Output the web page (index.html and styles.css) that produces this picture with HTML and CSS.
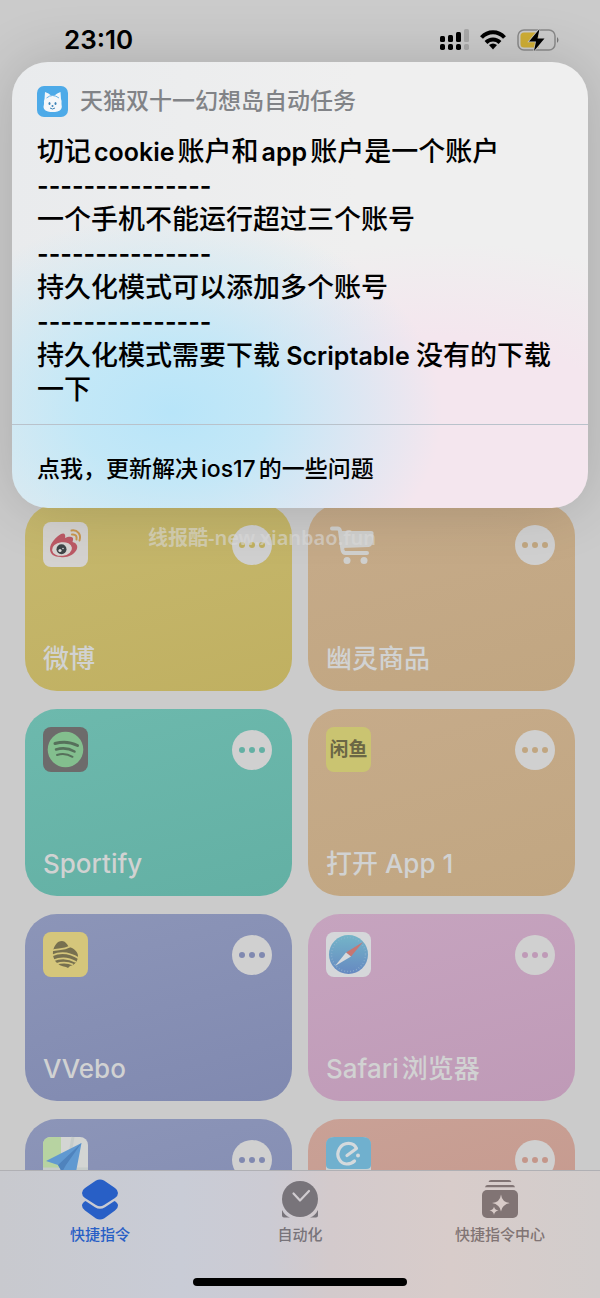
FILE: index.html
```html
<!DOCTYPE html>
<html lang="zh-CN">
<head>
<meta charset="utf-8">
<meta name="viewport" content="width=device-width, initial-scale=1">
<title>快捷指令</title>
<link rel="stylesheet" href="styles.css">
</head>
<body>
<div class="app">
  <header class="status">
    <time class="clock">23:10</time>
    <div class="indicators">
      <svg width="32" height="22" viewBox="0 0 32 22" aria-hidden="true">
        <g fill="#000"><rect x="0" y="7" width="5" height="6" rx="1.5"/><rect x="8" y="6" width="5" height="7" rx="1.5"/><rect x="16" y="3" width="5" height="10" rx="1.5"/><rect x="0" y="15" width="5" height="6" rx="1.8"/><rect x="8" y="15" width="5" height="6" rx="1.8"/><rect x="16" y="15" width="5" height="6" rx="1.8"/></g>
        <g fill="#a9a9a9"><rect x="24" y="0" width="5" height="13" rx="1.5"/><rect x="24" y="15" width="5" height="6" rx="1.8"/></g>
      </svg>
      <svg width="28" height="22" viewBox="0 0 28 22" fill="none" stroke="#000" stroke-width="4" aria-hidden="true">
        <path d="M1.500 8.500C8 1.500 18 1.500 24.500 8.500"/><path d="M6 13.500C10 9.500 16 9.500 20 13.500"/><path d="M13 20.500l-4-4.500q4-3 8 0z" fill="#000" stroke="none"/>
      </svg>
      <svg width="44" height="26" viewBox="0 0 44 26" aria-hidden="true">
        <rect x="2" y="3" width="37" height="20" rx="6" fill="none" stroke="#8a8a8a" stroke-width="1.5"/>
        <path d="M8 5.500h15v15H8q-3.500 0-3.500-3.500V9q0-3.500 3.500-3.500z" fill="#cfae35"/>
        <path d="M41 10q3 3 0 6z" fill="#777"/>
        <path d="M23.500 2L13 14.500h7L18 24l10.500-12.500h-7z" fill="#000" stroke="#ccc" stroke-width="1.500" paint-order="stroke"/>
      </svg>
    </div>
  </header>

  <main class="library">
    <article class="card yellow">
      <div class="card-top">
        <svg class="icon" viewBox="0 0 45 45" aria-hidden="true"><rect width="45" height="45" rx="8" fill="#d4d2d0"/>
          <path d="M7 27c0-6 6-12 11-15 3-1.500 5 0 4 4 4-2 9-2 8 2l-.5 2c4 1 6 4 4 8-3 5-9 8-16 7C11 35 7 32 7 27z" fill="#bc5965"/><ellipse cx="19" cy="27" rx="10" ry="6.800" fill="#d8d5d3" transform="rotate(-7 19 27)"/><circle cx="18.500" cy="27.300" r="5" fill="#3f4548"/><circle cx="17" cy="28.500" r="1.600" fill="#ddd"/><circle cx="20" cy="26.500" r=".8" fill="#ddd"/><path d="M28.500 8.500c6-1 10 4 8 10M29 12.500c4-.5 5 2 4.500 5" fill="none" stroke="#c9974f" stroke-width="2" stroke-linecap="round"/></svg>
        <button class="more" aria-label="更多"><i></i><i></i><i></i></button>
      </div>
      <h2>微博</h2>
    </article>
    <article class="card tan">
      <div class="card-top">
        <svg class="icon" viewBox="0 0 45 45" aria-hidden="true"><path d="M6 6.500h5.500q2 0 2.500 2.500l2.500 19q.5 3 3 3H41" fill="none" stroke="#d0d0ce" stroke-width="4" stroke-linecap="round" stroke-linejoin="round"/><path d="M14 9h31q3 0 2.500 3l-1 9q-.5 3-3.500 4l-27 1z" fill="#d0d0ce"/><circle cx="21" cy="38.500" r="3.500" fill="#d0d0ce"/><circle cx="38" cy="38.500" r="3.500" fill="#d0d0ce"/></svg>
        <button class="more" aria-label="更多"><i></i><i></i><i></i></button>
      </div>
      <h2>幽灵商品</h2>
    </article>
    <article class="card teal">
      <div class="card-top">
        <svg class="icon" viewBox="0 0 45 45" aria-hidden="true"><rect width="45" height="45" rx="8" fill="#6d6b6b"/><circle cx="22.500" cy="22.500" r="17.800" fill="#83bf8e"/><g fill="none" stroke="#56705b" stroke-linecap="round"><path d="M12 16.500q12-3.500 22.500 2" stroke-width="3"/><path d="M13 22.500q10-3 18.500 2" stroke-width="2.500"/><path d="M14 28q8-2.500 15.500 1.800" stroke-width="2"/></g></svg>
        <button class="more" aria-label="更多"><i></i><i></i><i></i></button>
      </div>
      <h2>Sportify</h2>
    </article>
    <article class="card tan">
      <div class="card-top">
        <div class="icon fish">闲鱼</div>
        <button class="more" aria-label="更多"><i></i><i></i><i></i></button>
      </div>
      <h2>打开 App 1</h2>
    </article>
    <article class="card indigo">
      <div class="card-top">
        <svg class="icon" viewBox="0 0 45 45" aria-hidden="true"><rect width="45" height="45" rx="8" fill="#d5c67b"/><path d="M10 19c1-5 4-10 9-10 3 0 5 3 7 6 5 1 9 5 9 9 0 5-3 9-8 10l-2 2-2-1c-9-1-14-8-13-16z" fill="#77704f"/><g fill="none" stroke="#d5c67b" stroke-width="1.700"><path d="M9 18.500c6-2 11 0 18-4"/><path d="M9 23.500q13-6 27 3M10 28.500q12-5 23 1.500M13 32q9-3 17 .5"/></g></svg>
        <button class="more" aria-label="更多"><i></i><i></i><i></i></button>
      </div>
      <h2>VVebo</h2>
    </article>
    <article class="card pink">
      <div class="card-top">
        <svg class="icon" viewBox="0 0 45 45" aria-hidden="true"><defs><linearGradient id="sea" x2="0" y2="1"><stop stop-color="#74b5c8"/><stop offset="1" stop-color="#6689c1"/></linearGradient></defs><rect width="45" height="45" rx="8" fill="#d5d7da"/><circle cx="22.500" cy="22.500" r="19.500" fill="url(#sea)"/><circle cx="22.500" cy="22.500" r="17" fill="none" stroke="#8fb2cf" stroke-width="1.500" stroke-dasharray=".7 2.300"/><path d="M37 10L20 20.500l5 4z" fill="#c77672"/><path d="M9 34l11-13.500 5 4z" fill="#d7dadd"/></svg>
        <button class="more" aria-label="更多"><i></i><i></i><i></i></button>
      </div>
      <h2>Safari<span class="after">浏览器</span></h2>
    </article>
    <article class="card indigo">
      <div class="card-top">
        <svg class="icon" viewBox="0 0 45 45" aria-hidden="true"><rect width="45" height="45" rx="8" fill="#d3d5d3"/><path d="M8 0h10v45H8q-8 0-8-8V8q0-8 8-8z" fill="#b7d3a1"/><path d="M0 32h45M22 45L30 0" stroke="#c6ccca" stroke-width="3"/><path d="M38.500 6L3 24l12 4 4 7h14z" fill="#6099d1"/><path d="M38.500 6L15 28l4 7 4-7z" fill="#4f83bd"/></svg>
        <button class="more" aria-label="更多"><i></i><i></i><i></i></button>
      </div>
    </article>
    <article class="card coral">
      <div class="card-top">
        <svg class="icon" viewBox="0 0 45 45" aria-hidden="true"><rect width="45" height="45" rx="8" fill="#c9d1d4"/><path d="M8 0h29q8 0 8 8v20q0 4-5 4H5q-5 0-5-4V8q0-8 8-8z" fill="#70b0ce"/><path d="M21 18.500l9.500-7c-3-7-13-6.500-17 0-4 7 0 15 7 15.500 3.500 0 6-1 8-3" fill="none" stroke="#d4dadd" stroke-width="3.200" stroke-linecap="round" stroke-linejoin="round"/><circle cx="32" cy="18.500" r="2" fill="#d4dadd"/></svg>
        <button class="more" aria-label="更多"><i></i><i></i><i></i></button>
      </div>
    </article>
  </main>

  <nav class="tabs">
    <a href="#shortcuts" class="tab active" aria-current="page">
      <svg width="40" height="42" viewBox="0 0 40 42" fill="currentColor" aria-hidden="true"><path d="M16 1.500q4-2 8 0L35 9q3 2 3 5t-3 5l-11 7q-4 2.500-8 0L5 19q-3-2-3-5t3-5z"/><path d="M5.500 22l9.500 6.200q5 3 10 0l9.500-6.200q3.500 2 3.500 4.500 0 3-3 5L24 39.500q-4 2-8 0L5 31.500q-3-2-3-5Q2 24 5.500 22z"/></svg>
      <span>快捷指令</span>
    </a>
    <a href="#automation" class="tab">
      <svg width="40" height="42" viewBox="0 0 40 42" fill="currentColor" aria-hidden="true"><circle cx="20" cy="20" r="18"/><path d="M2 31q3 6 8 7.500H4q-2 0-2-2zM38 31q-3 6-8 7.500h6q2 0 2-2z"/><path d="M13.500 14.500l6.500 7L29 12" fill="none" stroke="#d0ccd0" stroke-width="2.200" stroke-linecap="round" stroke-linejoin="round"/></svg>
      <span>自动化</span>
    </a>
    <a href="#gallery" class="tab warm">
      <svg width="40" height="42" viewBox="0 0 40 42" fill="currentColor" aria-hidden="true"><path d="M11 1h18q2 0 2.500 2h-23q.5-2 2.500-2zM7.500 6h25q2 0 2.500 2.200H5q.5-2.200 2.500-2.200z"/><rect x="2" y="11" width="36" height="28" rx="5"/><path d="M21 15.500q1 8 9 8.500-8 1.500-9 8.500-1-7-9-8.500 8-.5 9-8.500zM14 27.500q.5 3.500 4.500 4-4 .5-4.500 4.500-.5-4-4.500-4.500 4-.5 4.500-4z" fill="#d8cbc8"/></svg>
      <span>快捷指令中心</span>
    </a>
    <div class="home-bar"></div>
  </nav>

  <section class="dialog" role="dialog" aria-labelledby="task">
    <div class="dialog-body">
      <div class="dialog-head">
        <svg width="31" height="31" viewBox="0 0 31 31" aria-hidden="true"><rect width="31" height="31" rx="7" fill="#4daae8"/><path d="M7.500 13L8 6q4 1 6 3.500h3.500Q20 7 23.500 6l.5 7q1 2 .5 5 1.500 6-4 7.500-5 1-9.500 0-6-1.500-4-7.500-.5-3 .5-5z" fill="#f4f7fa"/><path d="M9.500 12q6-5 12.500 0" fill="none" stroke="#65b2e8" stroke-width="1"/><g fill="#3d83b7"><ellipse cx="12.500" cy="17.500" rx="1" ry="1.500"/><ellipse cx="18.500" cy="17.500" rx="1" ry="1.500"/><circle cx="15.500" cy="20" r="1"/></g><path d="M13 22q2.500 2 5 0" stroke="#3d83b7" fill="none"/></svg>
        <h1 id="task">天猫双十一幻想岛自动任务</h1>
      </div>
      <p class="message">切记<span class="latin spaced">cookie</span>账户和<span class="latin spaced">app</span>账户是一个账户<br><span class="latin">---------------</span><br>一个手机不能运行超过三个账号<br><span class="latin">---------------</span><br>持久化模式可以添加多个账号<br><span class="latin">---------------</span><br>持久化模式需要下载<span class="latin"> Scriptable </span>没有的下载一下</p>
    </div>
    <button class="dialog-action">点我，更新解决<span class="spaced">ios17</span>的一些问题</button>
  </section>

  <div class="watermark">线报酷-new.xianbao.fun</div>
</div>
</body>
</html>
```
FILE: styles.css
```css
* { box-sizing: border-box; }
body {
  margin: 0;
  font-family: Inter, "Noto Sans CJK SC", sans-serif;
  background: #cbcbcb;
  color: #000;
}
h1, h2, p { margin: 0; }
button { border: 0; padding: 0; font: inherit; color: inherit; }
.app {
  position: relative;
  display: flex;
  flex-direction: column;
  height: 100vh;
  overflow: hidden;
}
.status {
  flex: none;
  display: flex;
  justify-content: space-between;
  align-items: center;
  height: 80px;
  padding: 0 40px 0 64px;
}
.clock { font-size: 26px; font-weight: 600; line-height: 32px; }
.indicators { display: flex; align-items: center; gap: 8px; }

.library {
  flex: 1;
  min-height: 0;
  overflow: hidden;
  display: grid;
  grid-template-columns: 1fr 1fr;
  grid-auto-rows: 187px;
  gap: 18px 16px;
  padding: 424px 25px 0;
}
.card {
  display: flex;
  flex-direction: column;
  justify-content: space-between;
  padding: 18px 20px 13px 18px;
  border-radius: 32px;
  color: var(--tint);
  background: linear-gradient(165deg, var(--light), var(--tint));
}
.yellow { --light: #c6b86e; --tint: #c0b061; }
.tan { --light: #c6ab8a; --tint: #c1a681; }
.teal { --light: #6db9ad; --tint: #63b0a4; }
.indigo { --light: #8c95b8; --tint: #8089b0; }
.pink { --light: #c6a4bf; --tint: #bf9ab7; }
.coral { --light: #c9a196; --tint: #c4968a; }
.card-top { display: flex; justify-content: space-between; align-items: center; }
.icon { width: 45px; height: 45px; overflow: visible; }
.fish {
  display: grid;
  place-items: center;
  border-radius: 8px;
  background: #cac471;
  color: #6b6745;
  font-size: 19px;
  font-weight: 700;
  line-height: 24px;
}
.more {
  display: flex;
  justify-content: center;
  align-items: center;
  gap: 4px;
  width: 40px;
  height: 40px;
  border-radius: 50%;
  background: #d0d0d0;
}
.more i { width: 6px; height: 6px; border-radius: 50%; background: currentColor; }
.card h2 {
  color: #d1d2d2;
  font-size: 26px;
  font-weight: 500;
  line-height: 38px;
}
.after { margin-left: 3px; }

.tabs {
  position: relative;
  flex: none;
  display: grid;
  grid-template-columns: repeat(3, 1fr);
  height: 128px;
  padding-top: 8px;
  border-top: 1px solid #b0b0b4;
  background: linear-gradient(90deg, #c8c9ce 0%, #c9ccd6 30%, #cccbd3 45%, #d3cacc 55%, #d8ccca 75%, #d2cdcc 100%);
}
.tab {
  display: flex;
  flex-direction: column;
  align-items: center;
  gap: 2px;
  color: #78747a;
  font-size: 15px;
  font-weight: 500;
  line-height: 24px;
  text-decoration: none;
}
.tab.active { color: #285fc6; }
.tab.warm { color: #817474; }
.home-bar {
  position: absolute;
  left: 50%;
  bottom: 12px;
  width: 214px;
  height: 8px;
  border-radius: 4px;
  background: #000;
  transform: translateX(-50%);
}

.dialog {
  position: absolute;
  top: 62px;
  left: 12px;
  right: 12px;
  overflow: hidden;
  border-radius: 36px;
  background:
    radial-gradient(ellipse 270px 200px at 160px 350px, #b8e5f9 0%, rgba(190, 231, 248, 0.9) 35%, rgba(215, 236, 245, 0) 100%),
    radial-gradient(ellipse 360px 190px at 430px 370px, #f4e6ee 0%, #f4e6ee 50%, rgba(242, 232, 239, 0) 100%),
    linear-gradient(90deg, #e9ebed, #efefef 60%);
  box-shadow: 0 0 60px rgba(0, 0, 0, 0.16);
}
.dialog-body { padding: 24px 25px 17px; }
.dialog-head { display: flex; align-items: center; gap: 12px; }
.dialog-head h1 {
  color: #818387;
  font-size: 23px;
  font-weight: 500;
  line-height: 31px;
}
.message {
  margin-top: 18px;
  font-size: 27px;
  font-weight: 500;
  line-height: 34px;
}
.latin { font-size: 25px; font-weight: 600; }
.spaced { margin: 0 3px; }
.dialog-action {
  display: block;
  width: 100%;
  height: 84px;
  padding: 0 25px;
  border-top: 1px solid #b9c2cb;
  background: none;
  text-align: left;
  font-size: 23px;
  font-weight: 500;
}
.watermark {
  position: absolute;
  top: 524px;
  left: 148px;
  color: rgba(216, 216, 216, 0.6);
  font-family: "Noto Sans", "Noto Sans CJK SC", sans-serif;
  font-size: 20px;
  font-weight: 600;
  line-height: 28px;
}
```
